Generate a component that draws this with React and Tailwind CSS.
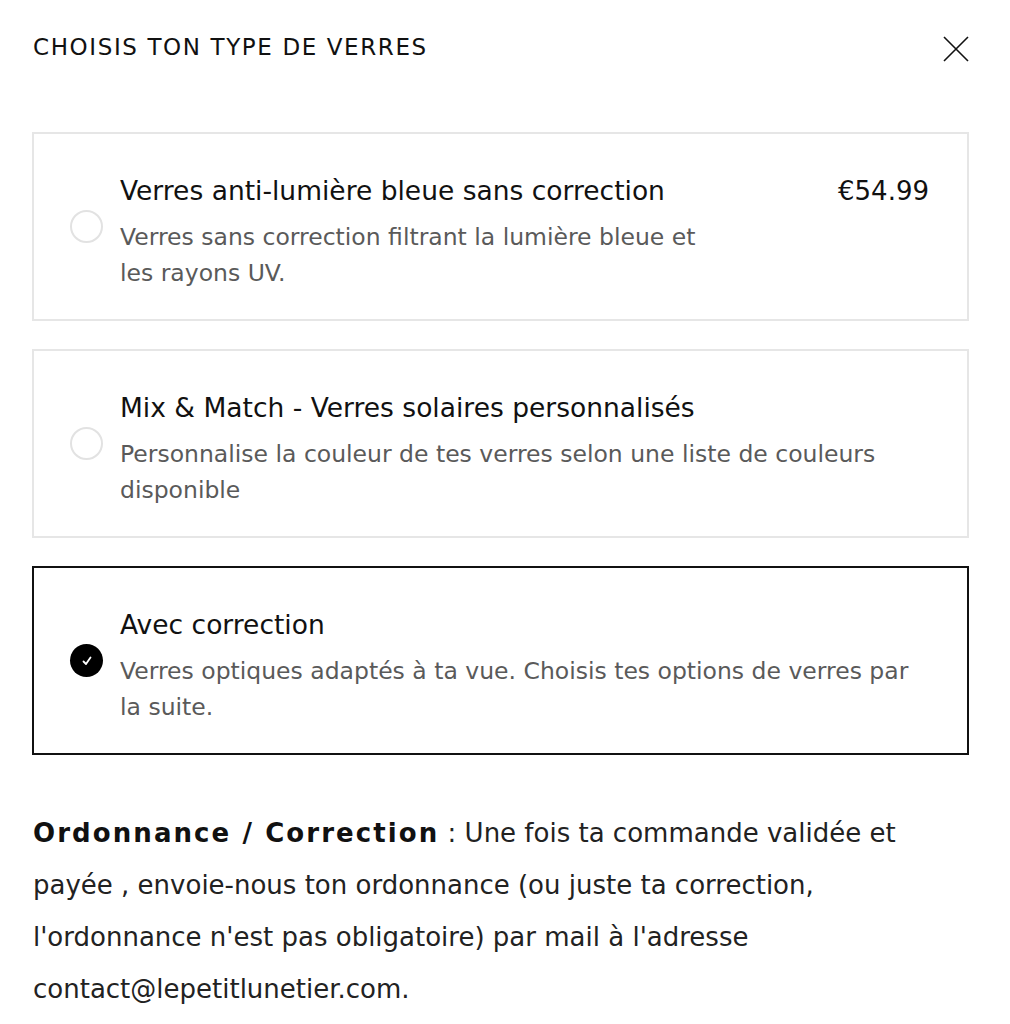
const options = [
  {
    id: 'anti-blue',
    title: 'Verres anti-lumière bleue sans correction',
    desc: 'Verres sans correction filtrant la lumière bleue et les rayons UV.',
    price: '€54.99',
  },
  {
    id: 'mix',
    title: 'Mix & Match - Verres solaires personnalisés',
    desc: 'Personnalise la couleur de tes verres selon une liste de couleurs disponible',
  },
  {
    id: 'correction',
    title: 'Avec correction',
    desc: 'Verres optiques adaptés à ta vue. Choisis tes options de verres par la suite.',
    selected: true,
  },
];

const Radio = ({ checked }) => {
  if (checked) {
    return (
      <span className="w-[33px] h-[33px] rounded-full bg-black flex items-center justify-center shrink-0">
        <svg width="12" height="12" viewBox="0 0 12 12" fill="none">
          <path d="M2.5 6.5 L5 9 L9.5 2.5" stroke="white" strokeWidth="1.8" strokeLinecap="round" strokeLinejoin="round" />
        </svg>
      </span>
    );
  }
  return <span className="w-[33px] h-[33px] rounded-full border-2 border-[#e2e2e2] shrink-0" />;
};

const App = () => {
  return (
    <div
      className="w-[1010px] min-h-[1024px] bg-white text-[#111]"
      style={{ fontFamily: '"DejaVu Sans", Arial, sans-serif' }}
    >
      <div className="pl-[33px] pr-[41px] pt-[34px] flex items-start justify-between">
        <h2 className="text-[23px] leading-[26px] tracking-[0.07em] uppercase">Choisis ton type de verres</h2>
        {/* close */}
        <svg width="26" height="26" viewBox="0 0 26 26" className="mt-[2px]">
          <path d="M1 1 L25 25 M25 1 L1 25" stroke="#111" strokeWidth="1.6" />
        </svg>
      </div>

      <div className="mt-[70px] px-[32px] w-[1001px] flex flex-col gap-[28px]">
        {options.map((opt) => (
          <div
            key={opt.id}
            className={
              'h-[189px] flex items-center pl-[36px] pr-[38px] ' +
              (opt.selected ? 'border-2 border-[#111]' : 'border-2 border-[#e6e6e6]')
            }
          >
            <Radio checked={opt.selected} />
            <div className="ml-[17px] flex-1 flex items-start pt-[11px]">
              <div className={opt.price ? 'w-[600px]' : 'flex-1'}>
                <div className="text-[26.5px] leading-[34px] text-[#111]">{opt.title}</div>
                <div className="mt-[11px] text-[23.5px] leading-[36px] text-[#5a5a5a]">{opt.desc}</div>
              </div>
              {opt.price && (
                <div className="ml-auto text-[26px] leading-[34px] text-[#111]">{opt.price}</div>
              )}
            </div>
          </div>
        ))}
      </div>

      <p className="mt-[52px] pl-[33px] pr-[90px] text-[26px] leading-[52px] text-[#222]">
        <span className="font-bold tracking-[0.08em] text-[#111]">Ordonnance / Correction</span> : Une fois ta commande validée et payée , envoie-nous ton ordonnance (ou juste ta correction, l'ordonnance n'est pas obligatoire) par mail à l'adresse contact@lepetitlunetier.com.
      </p>
    </div>
  );
};

export default App;
